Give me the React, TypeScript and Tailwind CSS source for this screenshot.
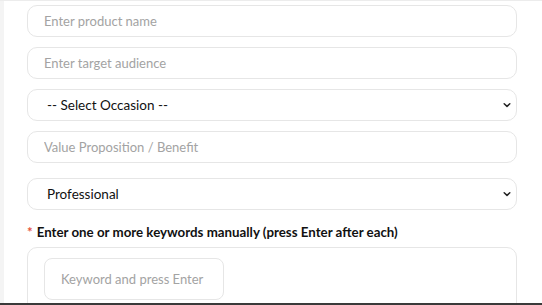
import React, { useState } from 'react';

const font = { fontFamily: 'Lato, "Open Sans", sans-serif' };

const Chevron = () => (
  <svg className="pointer-events-none absolute right-[6px] top-1/2 -translate-y-1/2" width="8" height="6" viewBox="0 0 8 6" fill="none">
    <path d="M1.2 1.8 L4 4.4 L6.8 1.8" stroke="#222" strokeWidth="1.5" strokeLinecap="round" strokeLinejoin="round" />
  </svg>
);

const TextField = ({ placeholder }: { placeholder: string }) => (
  <input
    type="text"
    placeholder={placeholder}
    className="h-[32px] w-full rounded-[10px] border border-[#e6e6e6] bg-white px-[16px] text-[13px] text-[#333] outline-none placeholder:text-[#a3a3a3]"
  />
);

const SelectField = ({ value, options }: { value: string; options: string[] }) => {
  const [val, setVal] = useState(value);
  return (
    <div className="relative w-full">
      <select
        value={val}
        onChange={(e) => setVal(e.target.value)}
        className="h-[32px] w-full appearance-none rounded-[10px] border border-[#e6e6e6] bg-white pl-[19px] pr-6 text-[13.5px] text-[#111] outline-none"
      >
        {options.map((o) => (
          <option key={o} value={o}>{o}</option>
        ))}
      </select>
      <Chevron />
    </div>
  );
};

export default function App() {
  const [keyword, setKeyword] = useState('');
  return (
    <div className="h-[305px] w-[542px] overflow-hidden border-t border-b-2 border-t-[#ececec] border-b-[#3a3a3a] bg-white" style={font}>
      <div className="flex h-full border-l-[4px] border-l-[#f4f4f4]">
        <div className="flex w-[513px] flex-col pl-[23px] pt-[4px]">
          <div className="flex flex-col gap-[10px]">
            <TextField placeholder="Enter product name" />
            <TextField placeholder="Enter target audience" />
            <SelectField value="-- Select Occasion --" options={['-- Select Occasion --', 'Birthday', 'Holiday', 'Anniversary']} />
            <TextField placeholder="Value Proposition / Benefit" />
          </div>
          <div className="mt-[15px]">
            <SelectField value="Professional" options={['Professional', 'Casual', 'Friendly', 'Witty']} />
          </div>
          <label className="mt-[13px] flex items-center gap-[4px] text-[13.3px] font-bold text-[#111]">
            <span className="text-[#e5533d]">*</span>
            Enter one or more keywords manually (press Enter after each)
          </label>
          <div className="mt-[4px] rounded-[10px] border border-[#e6e6e6] px-[16px] pb-4 pt-[10px]">
            <input
              type="text"
              value={keyword}
              onChange={(e) => setKeyword(e.target.value)}
              placeholder="Keyword and press Enter"
              className="h-[42px] w-[180px] rounded-[8px] border border-[#e6e6e6] bg-white px-[16px] text-[13px] outline-none placeholder:text-[#a3a3a3]"
            />
          </div>
        </div>
      </div>
    </div>
  );
}
